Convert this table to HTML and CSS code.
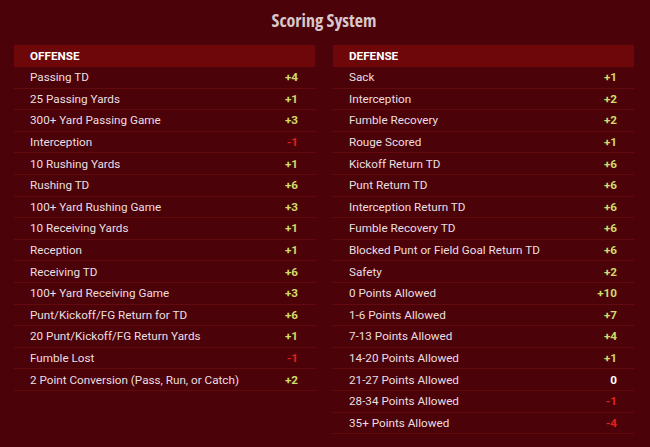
FILE: index.html
```html
<!DOCTYPE html>
<html>
<head>
<meta charset="utf-8">
<link rel="stylesheet" href="styles.css">
</head>
<body>
<div class="page">
  <h1 class="title">Scoring System</h1>
  <div class="columns">
    <div class="col">
      <div class="head">OFFENSE</div>
      <div class="row"><span>Passing TD</span><span class="pos">+4</span></div>
      <div class="row"><span>25 Passing Yards</span><span class="pos">+1</span></div>
      <div class="row"><span>300+ Yard Passing Game</span><span class="pos">+3</span></div>
      <div class="row"><span>Interception</span><span class="neg">-1</span></div>
      <div class="row"><span>10 Rushing Yards</span><span class="pos">+1</span></div>
      <div class="row"><span>Rushing TD</span><span class="pos">+6</span></div>
      <div class="row"><span>100+ Yard Rushing Game</span><span class="pos">+3</span></div>
      <div class="row"><span>10 Receiving Yards</span><span class="pos">+1</span></div>
      <div class="row"><span>Reception</span><span class="pos">+1</span></div>
      <div class="row"><span>Receiving TD</span><span class="pos">+6</span></div>
      <div class="row"><span>100+ Yard Receiving Game</span><span class="pos">+3</span></div>
      <div class="row"><span>Punt/Kickoff/FG Return for TD</span><span class="pos">+6</span></div>
      <div class="row"><span>20 Punt/Kickoff/FG Return Yards</span><span class="pos">+1</span></div>
      <div class="row"><span>Fumble Lost</span><span class="neg">-1</span></div>
      <div class="row"><span>2 Point Conversion (Pass, Run, or Catch)</span><span class="pos">+2</span></div>
    </div>
    <div class="col">
      <div class="head">DEFENSE</div>
      <div class="row"><span>Sack</span><span class="pos">+1</span></div>
      <div class="row"><span>Interception</span><span class="pos">+2</span></div>
      <div class="row"><span>Fumble Recovery</span><span class="pos">+2</span></div>
      <div class="row"><span>Rouge Scored</span><span class="pos">+1</span></div>
      <div class="row"><span>Kickoff Return TD</span><span class="pos">+6</span></div>
      <div class="row"><span>Punt Return TD</span><span class="pos">+6</span></div>
      <div class="row"><span>Interception Return TD</span><span class="pos">+6</span></div>
      <div class="row"><span>Fumble Recovery TD</span><span class="pos">+6</span></div>
      <div class="row"><span>Blocked Punt or Field Goal Return TD</span><span class="pos">+6</span></div>
      <div class="row"><span>Safety</span><span class="pos">+2</span></div>
      <div class="row"><span>0 Points Allowed</span><span class="pos">+10</span></div>
      <div class="row"><span>1-6 Points Allowed</span><span class="pos">+7</span></div>
      <div class="row"><span>7-13 Points Allowed</span><span class="pos">+4</span></div>
      <div class="row"><span>14-20 Points Allowed</span><span class="pos">+1</span></div>
      <div class="row"><span>21-27 Points Allowed</span><span class="zero">0</span></div>
      <div class="row"><span>28-34 Points Allowed</span><span class="neg">-1</span></div>
      <div class="row"><span>35+ Points Allowed</span><span class="neg">-4</span></div>
    </div>
  </div>
</div>
</body>
</html>
```
FILE: styles.css
```css
html, body {
  margin: 0;
  padding: 0;
  background: #4b0208;
}
body {
  width: 650px;
  height: 447px;
  overflow: hidden;
  font-family: Roboto, "Liberation Sans", sans-serif;
  color: #eadfe0;
}
.page {
  padding: 8px 16px 0 14px;
}
.title {
  margin: 0 0 14px;
  height: 23px;
  line-height: 24px;
  text-align: center;
  font-family: "Open Sans", sans-serif;
  font-stretch: 75%;
  font-weight: 700;
  font-size: 18px;
  color: #d9c8ca;
}
.columns {
  display: grid;
  grid-template-columns: 301px 301px;
  column-gap: 18px;
}
.head {
  height: 22px;
  line-height: 22px;
  background: #6e0709;
  font-weight: 700;
  font-size: 11.7px;
  color: #ffffff;
  padding-left: 16px;
}
.row {
  display: flex;
  justify-content: space-between;
  align-items: center;
  height: 20.6px;
  border-bottom: 1px solid #620a0e;
  padding: 0 17px 0 16px;
  font-size: 11.7px;
}
.pos, .neg, .zero {
  font-weight: 700;
}
.pos { color: #cfdc6c; }
.neg { color: #e3201d; }
.zero { color: #ffffff; }
```
